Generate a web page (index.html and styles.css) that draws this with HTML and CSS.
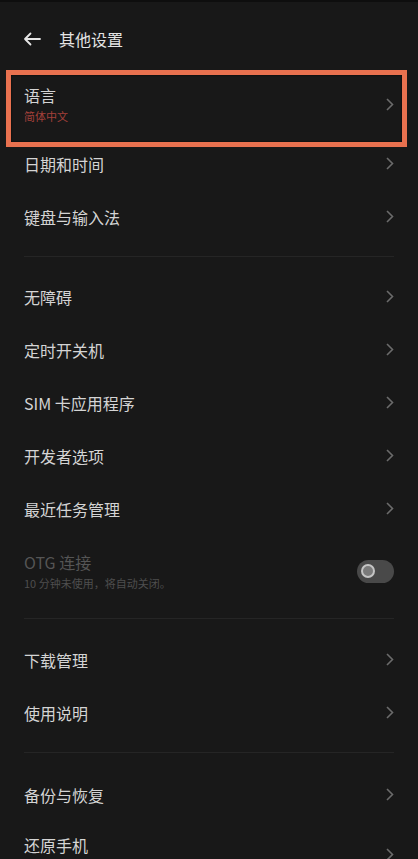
FILE: index.html
```html
<!DOCTYPE html>
<html lang="zh">
<head>
<meta charset="utf-8">
<link rel="stylesheet" href="styles.css">
</head>
<body>
<div class="screen">
  <header class="header">
    <svg class="back" width="18" height="14" viewBox="0 0 18 14"><path d="M17 7H2M7.5 1.5L2 7l5.5 5.5" fill="none" stroke="#e6e6e6" stroke-width="1.8" stroke-linecap="round" stroke-linejoin="round"/></svg>
    <span class="title">其他设置</span>
  </header>

  <div class="list">
    <div class="row two lang">
      <div class="texts">
        <div class="label">语言</div>
        <div class="sub red">简体中文</div>
      </div>
      <svg class="chev" width="8" height="13" viewBox="0 0 8 13"><path d="M1 1l5.5 5.5L1 12" fill="none" stroke="#6b6b6b" stroke-width="1.6"/></svg>
      <div class="highlight"></div>
    </div>
    <div class="row"><span class="label">日期和时间</span><svg class="chev" width="8" height="13" viewBox="0 0 8 13"><path d="M1 1l5.5 5.5L1 12" fill="none" stroke="#6b6b6b" stroke-width="1.6"/></svg></div>
    <div class="row"><span class="label">键盘与输入法</span><svg class="chev" width="8" height="13" viewBox="0 0 8 13"><path d="M1 1l5.5 5.5L1 12" fill="none" stroke="#6b6b6b" stroke-width="1.6"/></svg></div>
    <div class="divider"></div>
    <div class="row"><span class="label">无障碍</span><svg class="chev" width="8" height="13" viewBox="0 0 8 13"><path d="M1 1l5.5 5.5L1 12" fill="none" stroke="#6b6b6b" stroke-width="1.6"/></svg></div>
    <div class="row"><span class="label">定时开关机</span><svg class="chev" width="8" height="13" viewBox="0 0 8 13"><path d="M1 1l5.5 5.5L1 12" fill="none" stroke="#6b6b6b" stroke-width="1.6"/></svg></div>
    <div class="row"><span class="label">SIM 卡应用程序</span><svg class="chev" width="8" height="13" viewBox="0 0 8 13"><path d="M1 1l5.5 5.5L1 12" fill="none" stroke="#6b6b6b" stroke-width="1.6"/></svg></div>
    <div class="row"><span class="label">开发者选项</span><svg class="chev" width="8" height="13" viewBox="0 0 8 13"><path d="M1 1l5.5 5.5L1 12" fill="none" stroke="#6b6b6b" stroke-width="1.6"/></svg></div>
    <div class="row"><span class="label">最近任务管理</span><svg class="chev" width="8" height="13" viewBox="0 0 8 13"><path d="M1 1l5.5 5.5L1 12" fill="none" stroke="#6b6b6b" stroke-width="1.6"/></svg></div>
    <div class="row two otg">
      <div class="texts">
        <div class="label dim">OTG 连接</div>
        <div class="sub">10 分钟未使用，将自动关闭。</div>
      </div>
      <div class="toggle"><span class="knob"></span></div>
    </div>
    <div class="divider d2"></div>
    <div class="row"><span class="label">下载管理</span><svg class="chev" width="8" height="13" viewBox="0 0 8 13"><path d="M1 1l5.5 5.5L1 12" fill="none" stroke="#6b6b6b" stroke-width="1.6"/></svg></div>
    <div class="row"><span class="label">使用说明</span><svg class="chev" width="8" height="13" viewBox="0 0 8 13"><path d="M1 1l5.5 5.5L1 12" fill="none" stroke="#6b6b6b" stroke-width="1.6"/></svg></div>
    <div class="divider d3"></div>
    <div class="row"><span class="label">备份与恢复</span><svg class="chev" width="8" height="13" viewBox="0 0 8 13"><path d="M1 1l5.5 5.5L1 12" fill="none" stroke="#6b6b6b" stroke-width="1.6"/></svg></div>
    <div class="row last"><span class="label">还原手机</span><svg class="chev" width="8" height="13" viewBox="0 0 8 13"><path d="M1 1l5.5 5.5L1 12" fill="none" stroke="#6b6b6b" stroke-width="1.6"/></svg></div>
  </div>
</div>
</body>
</html>
```

FILE: styles.css
```css
html, body {
  margin: 0;
  padding: 0;
  background: #181818;
}
body {
  font-family: "Noto Sans CJK SC", "Noto Sans", sans-serif;
  color: #d4d4d4;
  width: 418px;
  height: 859px;
  overflow: hidden;
}
.screen {
  border-top: 2px solid #0e0e0e;
  position: relative;
}
.header {
  display: flex;
  align-items: center;
  height: 22px;
  padding: 26px 0 0 23px;
  gap: 18px;
}
.back { display: block; }
.title {
  font-size: 16px;
  line-height: 22px;
  color: #e4e4e4;
}
.list {
  padding-top: 15px;
}
.row {
  position: relative;
  display: flex;
  align-items: center;
  justify-content: space-between;
  height: 53px;
  padding: 0 24px 0 24px;
  box-sizing: border-box;
}
.row.lang { height: 72px; padding-top: 6px; }
.row.otg { height: 66px; padding-top: 6px; }
.label {
  font-size: 16px;
  line-height: 22px;
  color: #d4d4d4;
}
.label.dim { color: #555; }
.sub {
  font-size: 11px;
  line-height: 16px;
  color: #4e4e4e;
  margin-top: 2px;
}
.sub.red { color: #a3403a; }
.chev {
  display: block;
}
.row.last { align-items: flex-start; padding-top: 13px; }
.row.last .chev { margin-top: 14px; }
.divider {
  height: 1px;
  background: #252525;
  margin: 13px 24px 13px 24px;
}
.divider.d2 { margin: 17px 24px 14px; }
.divider.d3 { margin: 13px 24px 15px; }
.toggle {
  width: 37px;
  height: 23px;
  border-radius: 12px;
  background: #494949;
  display: flex;
  align-items: center;
  padding-left: 4px;
  box-sizing: border-box;
}
.knob {
  width: 14px;
  height: 14px;
  border-radius: 50%;
  background: #7a7a7a;
  border: 2.5px solid #c4c4c4;
  box-sizing: border-box;
}
.highlight {
  position: absolute;
  left: 6px;
  right: 11px;
  top: 5px;
  bottom: -10px;
  border: 5px solid #e8714f;
  box-shadow: inset 0 0 2px #000;
  pointer-events: none;
}
```
